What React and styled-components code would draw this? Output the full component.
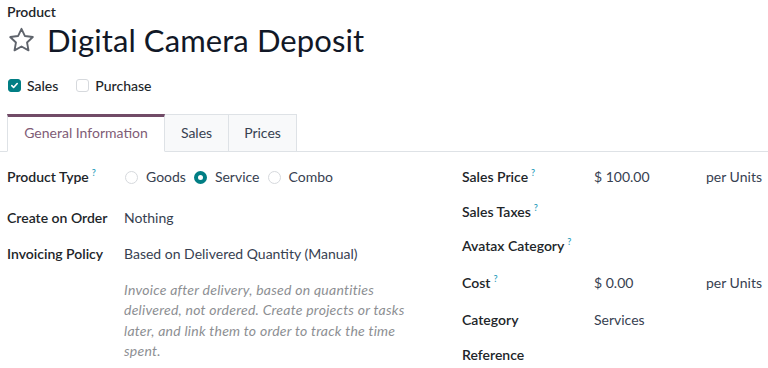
import React from "react";
import styled, { createGlobalStyle } from "styled-components";

const Global = createGlobalStyle`
  html, body { margin: 0; padding: 0; background: #fff; }
  body { font-family: "Lato", "Noto Sans", sans-serif; font-size: 14px; color: #374151; }
  * { box-sizing: border-box; }
`;

const Page = styled.div`
  width: 768px;
  height: 368px;
  overflow: hidden;
  padding: 3px 0 0 0;
`;

const Head = styled.div`
  padding: 0 7px;
`;

const Kicker = styled.div`
  font-size: 14px;
  font-weight: 600;
  color: #212529;
  line-height: 17px;
`;

const TitleRow = styled.div`
  display: flex;
  align-items: center;
  gap: 11px;
  height: 40px;
`;

const Title = styled.h1`
  margin: 0;
  font-size: 31px;
  font-weight: 400;
  color: #111827;
  letter-spacing: 0.1px;
`;

const Checks = styled.div`
  display: flex;
  align-items: center;
  gap: 17px;
  margin-top: 15px;
  height: 20px;
`;

const CheckItem = styled.label`
  display: flex;
  align-items: center;
  gap: 6px;
  color: #212529;
  font-size: 14px;
  font-weight: 500;
  padding-left: 1px;
`;

const Box = styled.span`
  width: 13px;
  height: 13px;
  border-radius: 3px;
  display: inline-flex;
  align-items: center;
  justify-content: center;
  background: ${(p) => (p.$on ? "#017e84" : "#fff")};
  border: 1px solid ${(p) => (p.$on ? "#017e84" : "#d6d9dd")};
`;

const Tabs = styled.div`
  display: flex;
  margin-top: 19px;
  padding-left: 7px;
  border-bottom: 1px solid #dee2e6;
  height: 38px;
`;

const Tab = styled.div`
  display: flex;
  align-items: center;
  justify-content: center;
  width: ${(p) => p.$w}px;
  height: 38px;
  margin-bottom: -1px;
  font-size: 14px;
  color: ${(p) => (p.$active ? "#7f5c76" : "#374151")};
  background: ${(p) => (p.$active ? "#fff" : "#f8f9fa")};
  border: 1px solid #dee2e6;
  border-left-width: ${(p) => (p.$first ? 1 : 0)}px;
  border-top: ${(p) => (p.$active ? "3px solid #714b67" : "1px solid #dee2e6")};
  border-bottom-color: ${(p) => (p.$active ? "#fff" : "#dee2e6")};
  padding-bottom: ${(p) => (p.$active ? 3 : 2)}px;
`;

const Body = styled.div`
  display: grid;
  grid-template-columns: 455px 313px;
  padding-top: 15px;
`;

const Group = styled.div`
  display: grid;
  grid-template-columns: ${(p) => p.$cols};
  align-content: start;
  padding-left: ${(p) => p.$pl}px;
`;

const Label = styled.div`
  font-weight: 600;
  color: #212529;
  height: ${(p) => p.$h}px;
  line-height: 20px;
  white-space: nowrap;
`;

const Help = styled.sup`
  color: #2fa0bd;
  font-size: 9px;
  font-weight: 600;
  margin-left: 3px;
  vertical-align: 6px;
  line-height: 0;
`;

const Value = styled.div`
  height: ${(p) => p.$h}px;
  line-height: 20px;
  color: #374151;
  white-space: nowrap;
  grid-column: ${(p) => p.$span || "auto"};
`;

const Radios = styled.div`
  display: flex;
  align-items: center;
  height: 20px;
  padding-left: 1px;
`;

const RadioItem = styled.span`
  display: inline-flex;
  align-items: center;
  gap: 8px;
  margin-right: 8px;
`;

const Dot = styled.span`
  width: 13px;
  height: 13px;
  border-radius: 50%;
  background: #fff;
  border: ${(p) => (p.$on ? "4px solid #017e84" : "1px solid #d6d9dd")};
`;

const Note = styled.div`
  grid-column: 2;
  font-style: italic;
  color: #8d8f93;
  line-height: 20.4px;
  width: 292px;
  letter-spacing: 0.25px;
  white-space: normal;
  padding-top: 16px;
`;

const Star = () => (
  <svg width="29" height="28" viewBox="0 0 24 24" fill="none" stroke="#5f646c" strokeWidth="1.6" strokeLinejoin="round">
    <path d="M12 2.4l2.95 6.2 6.75.85-4.95 4.7 1.25 6.7L12 17.6l-6 3.25 1.25-6.7L2.3 9.45l6.75-.85z" />
  </svg>
);

const Tick = () => (
  <svg width="9" height="9" viewBox="0 0 10 10" fill="none" stroke="#fff" strokeWidth="1.8" strokeLinecap="round" strokeLinejoin="round">
    <path d="M2 5.2l2 2 4-4.4" />
  </svg>
);

export default function App() {
  return (
    <Page>
      <Global />
      <Head>
        <Kicker>Product</Kicker>
        <TitleRow>
          <Star />
          <Title>Digital Camera Deposit</Title>
        </TitleRow>
        <Checks>
          <CheckItem>
            <Box $on><Tick /></Box>Sales
          </CheckItem>
          <CheckItem>
            <Box />Purchase
          </CheckItem>
        </Checks>
      </Head>
      <Tabs>
        <Tab $active $first $w={158}>General Information</Tab>
        <Tab $w={64}>Sales</Tab>
        <Tab $w={68}>Prices</Tab>
      </Tabs>
      <Body>
        <Group $cols="117px 1fr" $pl={7}>
          <Label $h={41}>Product Type<Help>?</Help></Label>
          <Value $h={41}>
            <Radios>
              <RadioItem><Dot />Goods</RadioItem>
              <RadioItem><Dot $on />Service</RadioItem>
              <RadioItem><Dot />Combo</RadioItem>
            </Radios>
          </Value>
          <Label $h={36}>Create on Order</Label>
          <Value $h={36}>Nothing</Value>
          <Label $h={20}>Invoicing Policy</Label>
          <Value $h={20}>Based on Delivered Quantity (Manual)</Value>
          <Note>
            Invoice after delivery, based on quantities delivered, not ordered. Create projects or tasks later, and link them to order to track the time spent.
          </Note>
        </Group>
        <Group $cols="132px 112px 1fr" $pl={7}>
          <Label $h={35}>Sales Price<Help>?</Help></Label>
          <Value $h={35}>$ 100.00</Value>
          <Value $h={35}>per Units</Value>
          <Label $h={34}>Sales Taxes<Help>?</Help></Label>
          <Value $h={34} $span="span 2" />
          <Label $h={37}>Avatax Category<Help>?</Help></Label>
          <Value $h={37} $span="span 2" />
          <Label $h={37}>Cost<Help>?</Help></Label>
          <Value $h={37}>$ 0.00</Value>
          <Value $h={37}>per Units</Value>
          <Label $h={35}>Category</Label>
          <Value $h={35} $span="span 2">Services</Value>
          <Label $h={20}>Reference</Label>
          <Value $h={20} $span="span 2" />
        </Group>
      </Body>
    </Page>
  );
}
